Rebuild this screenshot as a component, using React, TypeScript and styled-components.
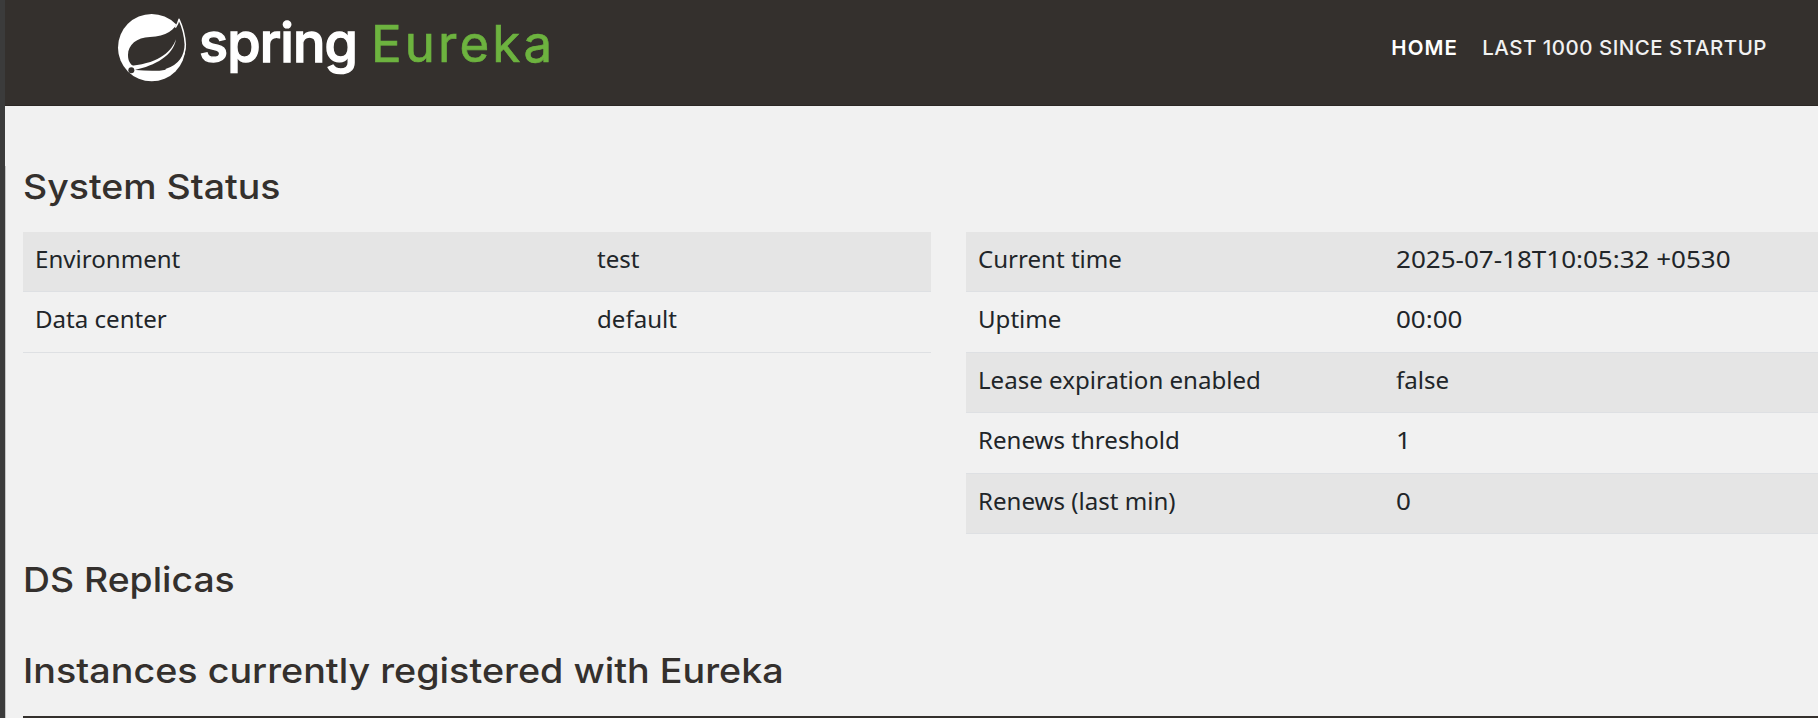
import React from "react";
import styled, { createGlobalStyle } from "styled-components";

const GlobalStyle = createGlobalStyle`
  *, *::before, *::after { box-sizing: border-box; }
  html, body { margin: 0; height: 718px; overflow: hidden; background: #f1f1f1; }
`;

const Shell = styled.div`
  display: flex;
  height: 718px;
  width: 1818px;
  overflow: hidden;
`;

const Edge = styled.div`
  flex: none;
  width: 5px;
  background: #3b3b3b;
`;

const Page = styled.div`
  flex: 1;
  min-width: 0;
  color: #212529;
  font-family: "Noto Sans", sans-serif;
`;

const Navbar = styled.header`
  display: flex;
  justify-content: space-between;
  height: 106px;
  padding: 0 51px 0 112px;
  background: #34302d;
  border-bottom: 1px solid #2b2724;
`;

const Brand = styled.div`
  display: flex;
  align-items: flex-start;
  padding-top: 13px;
  white-space: nowrap;
  font-family: Inter, sans-serif;
`;

const LogoMark = styled.svg`
  flex: none;
  display: block;
  width: 70px;
  height: 70px;
`;

const BrandWord = styled.span<{ $tone: "white" | "green" }>`
  display: block;
  line-height: ${(p) => (p.$tone === "white" ? 60 : 62)}px;
  color: ${(p) => (p.$tone === "white" ? "#fff" : "#6db33f")};
  font-size: ${(p) => (p.$tone === "white" ? 54 : 51)}px;
  font-weight: ${(p) => (p.$tone === "white" ? 500 : 400)};
  -webkit-text-stroke: ${(p) => (p.$tone === "white" ? "1.4px #fff" : "0.7px #6db33f")};
  letter-spacing: ${(p) => (p.$tone === "white" ? "-0.9px" : "3.1px")};
  margin-left: ${(p) => (p.$tone === "white" ? 12 : 16)}px;
  width: ${(p) => (p.$tone === "white" ? 156 : 180)}px;
`;

const Nav = styled.nav`
  display: flex;
  gap: 24px;
  padding-top: 33px;
  font: 500 20.5px/30px Inter, sans-serif;
  white-space: nowrap;
`;

const NavLink = styled.a<{ $active?: boolean }>`
  color: ${(p) => (p.$active ? "#fff" : "#f1f1f1")};
  text-decoration: none;
  font-weight: ${(p) => (p.$active ? 600 : 500)};
  letter-spacing: ${(p) => (p.$active ? 1.1 : 0.5)}px;
`;

const Content = styled.main`
  height: 612px;
  padding-left: 17px;
  border-left: 1px solid #c4c4c4;
`;

const Heading = styled.h1<{ $top: number; $gap: number; $stretch: number }>`
  margin: ${(p) => p.$top}px 0 ${(p) => p.$gap}px;
  color: #34302d;
  font: 500 34.5px/42px Inter, sans-serif;
  transform: scaleX(${(p) => p.$stretch});
  transform-origin: left;
  white-space: nowrap;
`;

const Columns = styled.div`
  display: grid;
  grid-template-columns: 908px 908px;
  column-gap: 35px;
  align-items: start;
  height: 302px;
`;

const Table = styled.div``;

const Row = styled.div<{ $label: number; $shaded: boolean }>`
  display: grid;
  grid-template-columns: ${(p) => p.$label}px 1fr;
  height: 60.4px;
  background: ${(p) => (p.$shaded ? "#e5e5e5" : "transparent")};
  border-bottom: 1px solid #dee0e3;
`;

const Cell = styled.div`
  padding: 11px 0 0 12px;
  font-size: 23px;
  line-height: 32px;
  white-space: nowrap;
`;

const CellText = styled.span<{ $stretch?: number }>`
  display: inline-block;
  transform: scaleX(${(p) => p.$stretch ?? 1.047});
  transform-origin: left;
`;

const Rule = styled.div`
  height: 2px;
  background: #34302d;
`;

type Entry = { label: string; value: string; stretch?: number };

const general: Entry[] = [
  { label: "Environment", value: "test" },
  { label: "Data center", value: "default" },
];

const runtime: Entry[] = [
  { label: "Current time", value: "2025-07-18T10:05:32 +0530", stretch: 1.131 },
  { label: "Uptime", value: "00:00", stretch: 1.13 },
  { label: "Lease expiration enabled", value: "false" },
  { label: "Renews threshold", value: "1", stretch: 1.13 },
  { label: "Renews (last min)", value: "0", stretch: 1.13 },
];

const StatusTable = ({ rows, labelWidth }: { rows: Entry[]; labelWidth: number }) => (
  <Table>
    {rows.map((r, i) => (
      <Row key={r.label} $label={labelWidth} $shaded={i % 2 === 0}>
        <Cell>
          <CellText>{r.label}</CellText>
        </Cell>
        <Cell>
          <CellText $stretch={r.stretch}>{r.value}</CellText>
        </Cell>
      </Row>
    ))}
  </Table>
);

const SpringLeaf = () => (
  <LogoMark viewBox="351 38 210 210" aria-hidden="true">
    <circle cx="455" cy="142" r="101" fill="#fff" />
    <path
      d="M537 57 C526 90 498 108 450 110 C410 111 384 134 384 164 C384 182 391 192 400 197 L407 209 C440 212 475 213 497 208 C540 196 556 164 556 132 C554 102 546 76 537 57Z"
      fill="#34302d"
    />
    <path
      d="M526 82 Q534 70 537 57 C546 76 554 102 556 132 C556 164 540 196 497 208"
      fill="none"
      stroke="#fff"
      strokeWidth="4.5"
      strokeLinejoin="round"
    />
    <path d="M528 117 C516 150 482 188 396 196 L404 209 C466 196 520 166 528 117Z" fill="#fff" />
    <circle cx="394" cy="210" r="9" fill="#34302d" />
  </LogoMark>
);

export default function App() {
  return (
    <>
      <GlobalStyle />
      <Shell>
        <Edge />
        <Page>
          <Navbar>
            <Brand>
              <SpringLeaf />
              <BrandWord $tone="white">spring</BrandWord>
              <BrandWord $tone="green">Eureka</BrandWord>
            </Brand>
            <Nav>
              <NavLink $active>HOME</NavLink>
              <NavLink>LAST 1000 SINCE STARTUP</NavLink>
            </Nav>
          </Navbar>
          <Content>
            <Heading $top={60} $gap={24} $stretch={1.086}>System Status</Heading>
            <Columns>
              <StatusTable rows={general} labelWidth={562} />
              <StatusTable rows={runtime} labelWidth={418} />
            </Columns>
            <Heading $top={25} $gap={0} $stretch={1.082}>DS Replicas</Heading>
            <Heading $top={49} $gap={24} $stretch={1.093}>Instances currently registered with Eureka</Heading>
            <Rule />
          </Content>
        </Page>
      </Shell>
    </>
  );
}
